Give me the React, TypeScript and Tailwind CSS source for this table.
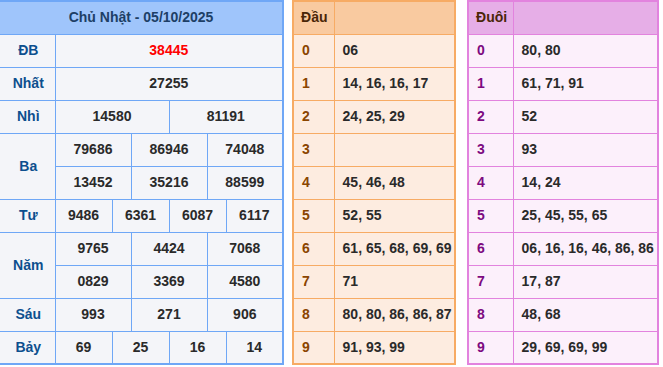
const FONT = "font-['Liberation_Sans',Arial,sans-serif]";

type Cell = { v: string; span: number; red?: boolean };
type Row = { label?: string; labelSpan?: number; cells: Cell[] };

const rows: Row[] = [
  { label: 'ĐB', cells: [{ v: '38445', span: 12, red: true }] },
  { label: 'Nhất', cells: [{ v: '27255', span: 12 }] },
  { label: 'Nhì', cells: [{ v: '14580', span: 6 }, { v: '81191', span: 6 }] },
  {
    label: 'Ba',
    labelSpan: 2,
    cells: [
      { v: '79686', span: 4 },
      { v: '86946', span: 4 },
      { v: '74048', span: 4 },
    ],
  },
  {
    cells: [
      { v: '13452', span: 4 },
      { v: '35216', span: 4 },
      { v: '88599', span: 4 },
    ],
  },
  {
    label: 'Tư',
    cells: [
      { v: '9486', span: 3 },
      { v: '6361', span: 3 },
      { v: '6087', span: 3 },
      { v: '6117', span: 3 },
    ],
  },
  {
    label: 'Năm',
    labelSpan: 2,
    cells: [
      { v: '9765', span: 4 },
      { v: '4424', span: 4 },
      { v: '7068', span: 4 },
    ],
  },
  {
    cells: [
      { v: '0829', span: 4 },
      { v: '3369', span: 4 },
      { v: '4580', span: 4 },
    ],
  },
  {
    label: 'Sáu',
    cells: [
      { v: '993', span: 4 },
      { v: '271', span: 4 },
      { v: '906', span: 4 },
    ],
  },
  {
    label: 'Bảy',
    cells: [
      { v: '69', span: 3 },
      { v: '25', span: 3 },
      { v: '16', span: 3 },
      { v: '14', span: 3 },
    ],
  },
];

const dau = ['06', '14, 16, 16, 17', '24, 25, 29', '', '45, 46, 48', '52, 55', '61, 65, 68, 69, 69', '71', '80, 80, 86, 86, 87', '91, 93, 99'];
const duoi = ['80, 80', '61, 71, 91', '52', '93', '14, 24', '25, 45, 55, 65', '06, 16, 16, 46, 86, 86', '17, 87', '48, 68', '29, 69, 69, 99'];

const ResultTable = () => (
  <table className="-ml-[2px] w-[284px] shrink-0 table-fixed border-collapse border-2 border-[#6fa7f6] bg-[#f4f5f9]">
    <colgroup>
      <col className="w-[56px]" />
      {Array.from({ length: 12 }).map((_, i) => (
        <col key={i} className="w-[19px]" />
      ))}
    </colgroup>
    <thead>
      <tr>
        <th colSpan={13} className="h-[33px] border border-[#6fa7f6] bg-[#9fc5fb] text-center text-[14px] font-bold text-[#1d3f66]">
          Chủ Nhật - 05/10/2025
        </th>
      </tr>
    </thead>
    <tbody>
      {rows.map((r, i) => (
        <tr key={i}>
          {r.label && (
            <td rowSpan={r.labelSpan ?? 1} className="h-[33px] border border-[#6fa7f6] pl-[2px] text-center text-[14px] font-bold text-[#0d4f8e]">
              {r.label}
            </td>
          )}
          {r.cells.map((c, j) => (
            <td
              key={j}
              colSpan={c.span}
              className={`h-[33px] border border-[#6fa7f6] text-center text-[14px] font-bold ${c.red ? 'text-[#ff0000]' : 'text-[#2a2a2a]'}`}
            >
              {c.v}
            </td>
          ))}
        </tr>
      ))}
    </tbody>
  </table>
);

type LotoProps = {
  title: string;
  items: string[];
  width: string;
  firstCol: string;
  border: string;
  head: string;
  body: string;
  digit: string;
};

const LotoTable = ({ title, items, width, firstCol, border, head, body, digit }: LotoProps) => (
  <table className={`${width} shrink-0 table-fixed border-collapse border-2 ${border} ${body}`}>
    <colgroup>
      <col className={firstCol} />
      <col />
    </colgroup>
    <thead>
      <tr className={head}>
        <th className={`h-[33px] border ${border} pl-[7px] text-left text-[14px] font-bold text-[#4a2608]`}>{title}</th>
        <th className={`border ${border}`}></th>
      </tr>
    </thead>
    <tbody>
      {items.map((v, i) => (
        <tr key={i}>
          <td className={`h-[33px] border ${border} pl-[8px] text-[14px] font-bold ${digit}`}>{i}</td>
          <td className={`border ${border} whitespace-nowrap pl-[8px] text-[14px] font-bold text-[#2a2a2a]`}>{v}</td>
        </tr>
      ))}
    </tbody>
  </table>
);

export default function App() {
  return (
    <div className={`flex h-[367px] w-[663px] items-start overflow-hidden bg-white ${FONT}`}>
      <ResultTable />
      <div className="ml-[8px]">
        <LotoTable
          title="Đầu"
          items={dau}
          width="w-[164px]"
          firstCol="w-[41px]"
          border="border-[#f7ab64]"
          head="bg-[#f9caa0]"
          body="bg-[#fdece0]"
          digit="text-[#8a4500]"
        />
      </div>
      <div className="ml-[11px]">
        <LotoTable
          title="Đuôi"
          items={duoi}
          width="w-[192px]"
          firstCol="w-[45px]"
          border="border-[#e283de]"
          head="bg-[#e6aee7]"
          body="bg-[#fcf0fb]"
          digit="text-[#7d0a80]"
        />
      </div>
    </div>
  );
}
